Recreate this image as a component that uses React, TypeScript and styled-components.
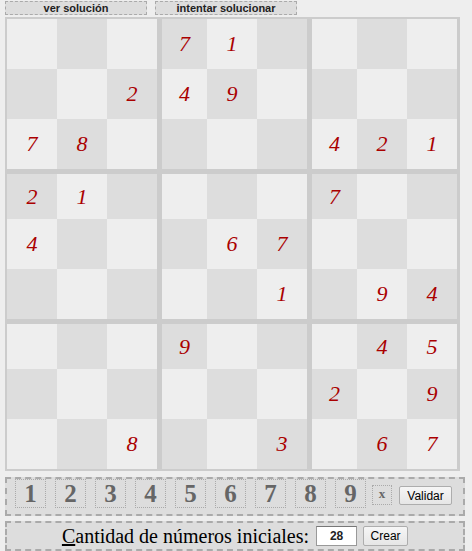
import React from "react";
import styled, { createGlobalStyle } from "styled-components";

const Global = createGlobalStyle`
  html, body { margin: 0; padding: 0; background: #eeeeee; }
  body { font-family: "Liberation Serif", "Times New Roman", serif; }
`;

const Page = styled.div`
  padding: 1px 0 0 5px;
  width: 460px;
`;

const TopBar = styled.div`
  display: flex;
  gap: 8px;
  height: 14px;
`;

const TopButton = styled.button`
  box-sizing: border-box;
  width: 142px;
  height: 14px;
  padding: 0;
  margin: 0;
  border: 1px dashed #aaaaaa;
  background: #dddddd;
  font-family: "Liberation Sans", Arial, sans-serif;
  font-weight: bold;
  font-size: 11px;
  line-height: 11px;
  color: #222222;
  cursor: pointer;
`;

const Board = styled.div`
  margin-top: 2px;
  display: grid;
  grid-template-columns: repeat(9, 50px);
  grid-template-rows: repeat(9, 50px);
  border: 2px solid #cccccc;
  border-right-width: 3px;
  width: 450px;
`;

const Cell = styled.div<{ $dark: boolean; $left: boolean; $top: boolean }>`
  box-sizing: border-box;
  background: ${(p) => (p.$dark ? "#dddddd" : "#eeeeee")};
  border-left: ${(p) => (p.$left ? "5px solid #cccccc" : "0")};
  border-top: ${(p) => (p.$top ? "5px solid #cccccc" : "0")};
  display: flex;
  align-items: center;
  justify-content: center;
  font-family: "Liberation Serif", "Times New Roman", serif;
  font-style: italic;
  font-size: 22px;
  color: #aa0000;
`;

const NumberBar = styled.div`
  box-sizing: border-box;
  margin-top: 6px;
  width: 460px;
  height: 39px;
  border: 2px dashed #aaaaaa;
  background: #dddddd;
  display: flex;
  align-items: flex-start;
  padding: 0 0 0 8px;
`;

const NumBox = styled.div`
  box-sizing: border-box;
  width: 31px;
  height: 29px;
  margin-right: 9px;
  border: 1px dotted #aaaaaa;
  display: flex;
  align-items: center;
  justify-content: center;
  font-family: "Liberation Serif", "Times New Roman", serif;
  font-weight: bold;
  font-size: 25px;
  color: #666666;
  cursor: pointer;
`;

const ClearBox = styled.div`
  box-sizing: border-box;
  width: 20px;
  height: 20px;
  margin: 6px 7px 0 -3px;
  border: 1px dotted #aaaaaa;
  display: flex;
  align-items: center;
  justify-content: center;
  font-family: "Liberation Serif", "Times New Roman", serif;
  font-weight: bold;
  font-size: 13px;
  color: #666666;
  padding-bottom: 2px;
`;

const NativeButton = styled.button<{ $w: number }>`
  box-sizing: border-box;
  width: ${(p) => p.$w}px;
  height: 19px;
  margin-top: 7px;
  padding: 0;
  border: 1px solid #adadad;
  border-radius: 2px;
  background: linear-gradient(#f6f6f6, #e6e6e6);
  font-family: "Liberation Sans", Arial, sans-serif;
  font-size: 12px;
  color: #000000;
`;

const CountBar = styled.div`
  box-sizing: border-box;
  margin-top: 5px;
  width: 460px;
  height: 30px;
  border: 2px dashed #aaaaaa;
  background: #dddddd;
  display: flex;
  align-items: center;
  justify-content: center;
  gap: 6px;
`;

const CountLabel = styled.label`
  font-family: "Liberation Serif", "Times New Roman", serif;
  font-size: 20px;
  color: #000000;
  margin-right: 1px;
  u { text-decoration: underline; }
`;

const CountInput = styled.input`
  box-sizing: border-box;
  width: 41px;
  height: 20px;
  border: 1px solid #999999;
  border-top-color: #777777;
  background: #ffffff;
  text-align: center;
  font-family: "Liberation Sans", Arial, sans-serif;
  font-size: 12px;
  font-weight: bold;
  color: #222222;
  padding: 0;
`;

const CreateButton = styled(NativeButton)`
  margin-top: 0;
  height: 20px;
`;

const puzzle = [
  "   71    ",
  "  249    ",
  "78    421",
  "21    7  ",
  "4   67   ",
  "     1 94",
  "   9   45",
  "      2 9",
  "  8  3 67",
];

export default function App() {
  return (
    <>
      <Global />
      <Page>
        <TopBar>
          <TopButton>ver solución</TopButton>
          <TopButton>intentar solucionar</TopButton>
        </TopBar>
        <Board>
          {puzzle.map((row, r) =>
            row.split("").map((ch, c) => (
              <Cell
                key={`${r}-${c}`}
                $dark={(r + c) % 2 === 1}
                $left={c === 3 || c === 6}
                $top={r === 3 || r === 6}
              >
                {ch.trim()}
              </Cell>
            ))
          )}
        </Board>
        <NumberBar>
          {[1, 2, 3, 4, 5, 6, 7, 8, 9].map((n) => (
            <NumBox key={n}>{n}</NumBox>
          ))}
          <ClearBox>x</ClearBox>
          <NativeButton $w={53}>Validar</NativeButton>
        </NumberBar>
        <CountBar>
          <CountLabel>
            <u>C</u>antidad de números iniciales:
          </CountLabel>
          <CountInput defaultValue="28" />
          <CreateButton $w={45}>Crear</CreateButton>
        </CountBar>
      </Page>
    </>
  );
}
